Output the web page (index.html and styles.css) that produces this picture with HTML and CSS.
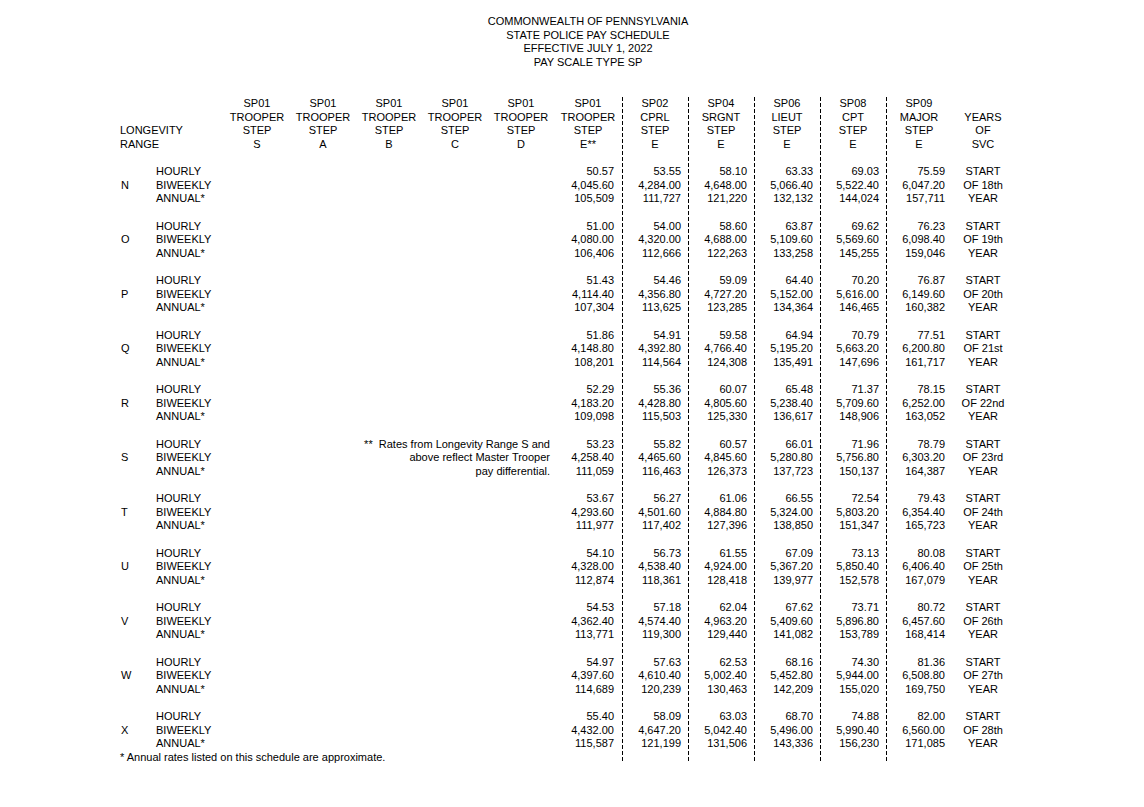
FILE: index.html
```html
<!DOCTYPE html>
<html>
<head>
<meta charset="utf-8">
<title>State Police Pay Schedule</title>
<link rel="stylesheet" href="styles.css">
</head>
<body>
<div class="title">
  COMMONWEALTH OF PENNSYLVANIA<br>
  STATE POLICE PAY SCHEDULE<br>
  EFFECTIVE JULY 1, 2022<br>
  PAY SCALE TYPE SP
</div>

<div class="sheet">
  <div class="grid">
    <div class="hd-range">LONGEVITY<br>RANGE</div>
    <div class="hd">SP01<br>TROOPER<br>STEP<br>S</div>
    <div class="hd">SP01<br>TROOPER<br>STEP<br>A</div>
    <div class="hd">SP01<br>TROOPER<br>STEP<br>B</div>
    <div class="hd">SP01<br>TROOPER<br>STEP<br>C</div>
    <div class="hd">SP01<br>TROOPER<br>STEP<br>D</div>
    <div class="hd">SP01<br>TROOPER<br>STEP<br>E**</div>
    <div class="hd">SP02<br>CPRL<br>STEP<br>E</div>
    <div class="hd">SP04<br>SRGNT<br>STEP<br>E</div>
    <div class="hd">SP06<br>LIEUT<br>STEP<br>E</div>
    <div class="hd">SP08<br>CPT<br>STEP<br>E</div>
    <div class="hd">SP09<br>MAJOR<br>STEP<br>E</div>
    <div class="hd hd-years"><br>YEARS<br>OF<br>SVC</div>

    <div class="rng">N</div>
    <div class="lbl">HOURLY<br>BIWEEKLY<br>ANNUAL*</div>
    <div class="val first">50.57<br>4,045.60<br>105,509</div>
    <div class="val">53.55<br>4,284.00<br>111,727</div>
    <div class="val">58.10<br>4,648.00<br>121,220</div>
    <div class="val">63.33<br>5,066.40<br>132,132</div>
    <div class="val">69.03<br>5,522.40<br>144,024</div>
    <div class="val">75.59<br>6,047.20<br>157,711</div>
    <div class="yrs">START<br>OF 18th<br>YEAR</div>

    <div class="rng">O</div>
    <div class="lbl">HOURLY<br>BIWEEKLY<br>ANNUAL*</div>
    <div class="val first">51.00<br>4,080.00<br>106,406</div>
    <div class="val">54.00<br>4,320.00<br>112,666</div>
    <div class="val">58.60<br>4,688.00<br>122,263</div>
    <div class="val">63.87<br>5,109.60<br>133,258</div>
    <div class="val">69.62<br>5,569.60<br>145,255</div>
    <div class="val">76.23<br>6,098.40<br>159,046</div>
    <div class="yrs">START<br>OF 19th<br>YEAR</div>

    <div class="rng">P</div>
    <div class="lbl">HOURLY<br>BIWEEKLY<br>ANNUAL*</div>
    <div class="val first">51.43<br>4,114.40<br>107,304</div>
    <div class="val">54.46<br>4,356.80<br>113,625</div>
    <div class="val">59.09<br>4,727.20<br>123,285</div>
    <div class="val">64.40<br>5,152.00<br>134,364</div>
    <div class="val">70.20<br>5,616.00<br>146,465</div>
    <div class="val">76.87<br>6,149.60<br>160,382</div>
    <div class="yrs">START<br>OF 20th<br>YEAR</div>

    <div class="rng">Q</div>
    <div class="lbl">HOURLY<br>BIWEEKLY<br>ANNUAL*</div>
    <div class="val first">51.86<br>4,148.80<br>108,201</div>
    <div class="val">54.91<br>4,392.80<br>114,564</div>
    <div class="val">59.58<br>4,766.40<br>124,308</div>
    <div class="val">64.94<br>5,195.20<br>135,491</div>
    <div class="val">70.79<br>5,663.20<br>147,696</div>
    <div class="val">77.51<br>6,200.80<br>161,717</div>
    <div class="yrs">START<br>OF 21st<br>YEAR</div>

    <div class="rng">R</div>
    <div class="lbl">HOURLY<br>BIWEEKLY<br>ANNUAL*</div>
    <div class="val first">52.29<br>4,183.20<br>109,098</div>
    <div class="val">55.36<br>4,428.80<br>115,503</div>
    <div class="val">60.07<br>4,805.60<br>125,330</div>
    <div class="val">65.48<br>5,238.40<br>136,617</div>
    <div class="val">71.37<br>5,709.60<br>148,906</div>
    <div class="val">78.15<br>6,252.00<br>163,052</div>
    <div class="yrs">START<br>OF 22nd<br>YEAR</div>

    <div class="rng">S</div>
    <div class="lbl">HOURLY<br>BIWEEKLY<br>ANNUAL*</div>
    <div class="note">**&nbsp; Rates from Longevity Range S and<br>above reflect Master Trooper<br>pay differential.</div>
    <div class="val first">53.23<br>4,258.40<br>111,059</div>
    <div class="val">55.82<br>4,465.60<br>116,463</div>
    <div class="val">60.57<br>4,845.60<br>126,373</div>
    <div class="val">66.01<br>5,280.80<br>137,723</div>
    <div class="val">71.96<br>5,756.80<br>150,137</div>
    <div class="val">78.79<br>6,303.20<br>164,387</div>
    <div class="yrs">START<br>OF 23rd<br>YEAR</div>

    <div class="rng">T</div>
    <div class="lbl">HOURLY<br>BIWEEKLY<br>ANNUAL*</div>
    <div class="val first">53.67<br>4,293.60<br>111,977</div>
    <div class="val">56.27<br>4,501.60<br>117,402</div>
    <div class="val">61.06<br>4,884.80<br>127,396</div>
    <div class="val">66.55<br>5,324.00<br>138,850</div>
    <div class="val">72.54<br>5,803.20<br>151,347</div>
    <div class="val">79.43<br>6,354.40<br>165,723</div>
    <div class="yrs">START<br>OF 24th<br>YEAR</div>

    <div class="rng">U</div>
    <div class="lbl">HOURLY<br>BIWEEKLY<br>ANNUAL*</div>
    <div class="val first">54.10<br>4,328.00<br>112,874</div>
    <div class="val">56.73<br>4,538.40<br>118,361</div>
    <div class="val">61.55<br>4,924.00<br>128,418</div>
    <div class="val">67.09<br>5,367.20<br>139,977</div>
    <div class="val">73.13<br>5,850.40<br>152,578</div>
    <div class="val">80.08<br>6,406.40<br>167,079</div>
    <div class="yrs">START<br>OF 25th<br>YEAR</div>

    <div class="rng">V</div>
    <div class="lbl">HOURLY<br>BIWEEKLY<br>ANNUAL*</div>
    <div class="val first">54.53<br>4,362.40<br>113,771</div>
    <div class="val">57.18<br>4,574.40<br>119,300</div>
    <div class="val">62.04<br>4,963.20<br>129,440</div>
    <div class="val">67.62<br>5,409.60<br>141,082</div>
    <div class="val">73.71<br>5,896.80<br>153,789</div>
    <div class="val">80.72<br>6,457.60<br>168,414</div>
    <div class="yrs">START<br>OF 26th<br>YEAR</div>

    <div class="rng">W</div>
    <div class="lbl">HOURLY<br>BIWEEKLY<br>ANNUAL*</div>
    <div class="val first">54.97<br>4,397.60<br>114,689</div>
    <div class="val">57.63<br>4,610.40<br>120,239</div>
    <div class="val">62.53<br>5,002.40<br>130,463</div>
    <div class="val">68.16<br>5,452.80<br>142,209</div>
    <div class="val">74.30<br>5,944.00<br>155,020</div>
    <div class="val">81.36<br>6,508.80<br>169,750</div>
    <div class="yrs">START<br>OF 27th<br>YEAR</div>

    <div class="rng">X</div>
    <div class="lbl">HOURLY<br>BIWEEKLY<br>ANNUAL*</div>
    <div class="val first">55.40<br>4,432.00<br>115,587</div>
    <div class="val">58.09<br>4,647.20<br>121,199</div>
    <div class="val">63.03<br>5,042.40<br>131,506</div>
    <div class="val">68.70<br>5,496.00<br>143,336</div>
    <div class="val">74.88<br>5,990.40<br>156,230</div>
    <div class="val">82.00<br>6,560.00<br>171,085</div>
    <div class="yrs">START<br>OF 28th<br>YEAR</div>
  </div>
  <div class="footnote">* Annual rates listed on this schedule are approximate.</div>
</div>
</body>
</html>
```
FILE: styles.css
```css
html, body {
  margin: 0;
  padding: 0;
  background: #fff;
}

body {
  font-family: "Liberation Sans", Arial, sans-serif;
  font-size: 11px;
  line-height: 13.625px;
  color: #000;
  padding-top: 15.2px;
}

.title {
  margin-left: 120px;
  width: 936px;
  text-align: center;
  margin-bottom: 27.25px;
}

.sheet {
  margin-left: 120px;
  width: 894px;
  background-image:
    repeating-linear-gradient(to bottom, #000 0 4px, transparent 4px 6px),
    repeating-linear-gradient(to bottom, #000 0 4px, transparent 4px 6px),
    repeating-linear-gradient(to bottom, #000 0 4px, transparent 4px 6px),
    repeating-linear-gradient(to bottom, #000 0 4px, transparent 4px 6px),
    repeating-linear-gradient(to bottom, #000 0 4px, transparent 4px 6px);
  background-size: 1px calc(100% - 3px);
  background-position: 502px 0, 568px 0, 634px 0, 700px 0, 766px 0;
  background-repeat: no-repeat;
}

.grid {
  display: grid;
  grid-template-columns: 36px 68px repeat(5, 66px) 68px repeat(5, 66px) 62px;
  row-gap: 13.625px;
}

.hd {
  text-align: center;
  white-space: nowrap;
}

.hd-range {
  grid-column: 1 / span 2;
  padding-top: 27.25px;
}

.rng {
  padding-top: 13.625px;
  padding-left: 1px;
}

.lbl {
  white-space: nowrap;
}

.note {
  grid-column: 5 / span 3;
  text-align: right;
  padding-right: 4px;
  white-space: nowrap;
}

.val {
  text-align: right;
  padding-right: 7px;
  white-space: nowrap;
}

.val.first {
  grid-column: 8;
  padding-right: 8px;
}

.yrs {
  text-align: center;
  white-space: nowrap;
}

.footnote {
  white-space: nowrap;
}
```
